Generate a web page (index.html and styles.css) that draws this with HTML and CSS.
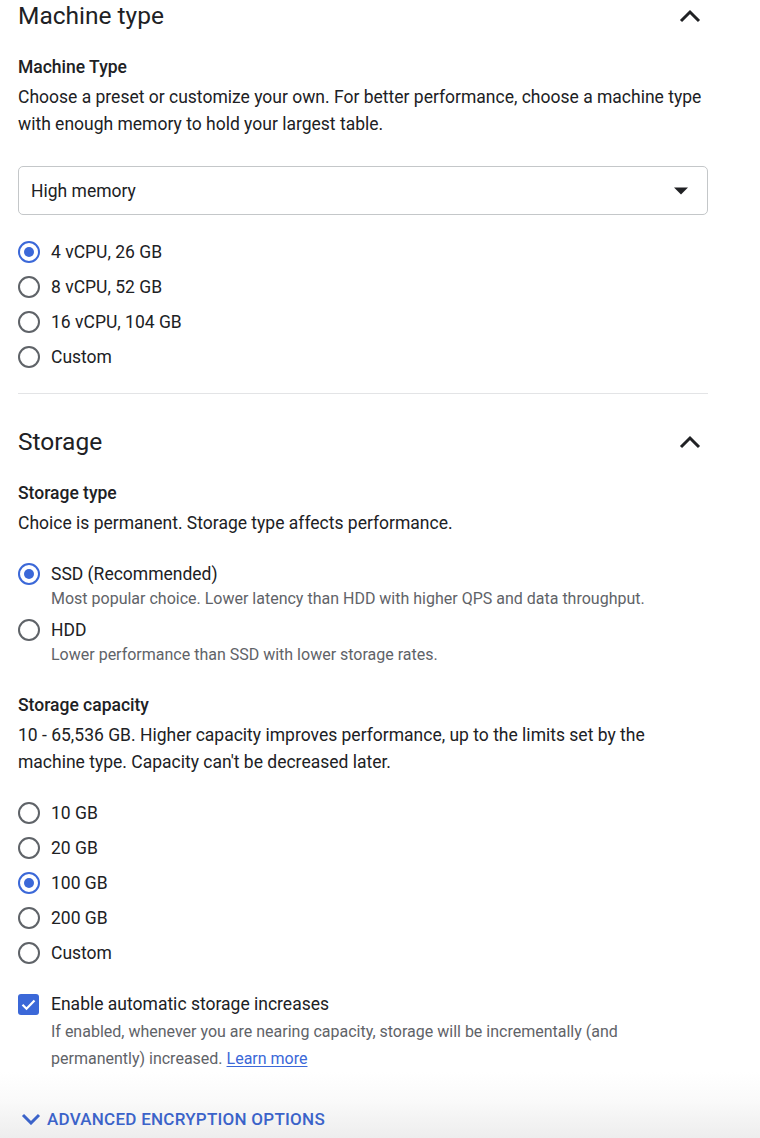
FILE: index.html
```html
<!DOCTYPE html>
<html lang="en">
<head>
<meta charset="utf-8">
<title>Machine type and storage</title>
<link rel="stylesheet" href="styles.css">
</head>
<body>
<main class="page">
  <section class="section">
    <div class="section-head">
      <h2 class="section-title">Machine type</h2>
      <svg class="chev" width="22" height="14" viewBox="0 0 22 14"><path d="M2 12l9-9 9 9" fill="none" stroke="#202124" stroke-width="3"/></svg>
    </div>
    <h3 class="sub">Machine Type</h3>
    <p class="desc">Choose a preset or customize your own. For better performance, choose a machine type with enough memory to hold your largest table.</p>
    <div class="select">
      <span>High memory</span>
      <svg class="caret" width="16" height="8" viewBox="0 0 16 8"><path d="M1 0.5h14L8 7.5z"/></svg>
    </div>
    <ul class="radios mt-type">
      <li class="radio-row"><span class="radio on"></span><span>4 vCPU, 26 GB</span></li>
      <li class="radio-row"><span class="radio"></span><span>8 vCPU, 52 GB</span></li>
      <li class="radio-row"><span class="radio"></span><span>16 vCPU, 104 GB</span></li>
      <li class="radio-row"><span class="radio"></span><span>Custom</span></li>
    </ul>
  </section>
  <hr class="divider">
  <section class="section">
    <div class="section-head">
      <h2 class="section-title">Storage</h2>
      <svg class="chev" width="22" height="14" viewBox="0 0 22 14"><path d="M2 12l9-9 9 9" fill="none" stroke="#202124" stroke-width="3"/></svg>
    </div>
    <h3 class="sub">Storage type</h3>
    <p class="desc">Choice is permanent. Storage type affects performance.</p>
    <ul class="radios st-type">
      <li class="opt">
        <div class="radio-row"><span class="radio on"></span><span>SSD (Recommended)</span></div>
        <p class="help">Most popular choice. Lower latency than HDD with higher QPS and data throughput.</p>
      </li>
      <li class="opt">
        <div class="radio-row"><span class="radio"></span><span>HDD</span></div>
        <p class="help">Lower performance than SSD with lower storage rates.</p>
      </li>
    </ul>
    <h3 class="sub cap">Storage capacity</h3>
    <p class="desc">10 - 65,536 GB. Higher capacity improves performance, up to the limits set by the machine type. Capacity can't be decreased later.</p>
    <ul class="radios st-cap">
      <li class="radio-row"><span class="radio"></span><span>10 GB</span></li>
      <li class="radio-row"><span class="radio"></span><span>20 GB</span></li>
      <li class="radio-row"><span class="radio on"></span><span>100 GB</span></li>
      <li class="radio-row"><span class="radio"></span><span>200 GB</span></li>
      <li class="radio-row"><span class="radio"></span><span>Custom</span></li>
    </ul>
    <div class="check-block">
      <div class="radio-row">
        <span class="checkbox"><svg width="21" height="21" viewBox="0 0 21 21"><path d="M4.5 10.8l4 4 8-8.3" fill="none" stroke="#fff" stroke-width="2.2"/></svg></span>
        <span>Enable automatic storage increases</span>
      </div>
      <p class="help tall">If enabled, whenever you are nearing capacity, storage will be incrementally (and permanently) increased. <a class="link" href="#">Learn more</a></p>
    </div>
  </section>
  <footer class="footer">
    <div class="adv">
      <svg width="20" height="12" viewBox="0 0 20 12"><path d="M2 2l8 8 8-8" fill="none" stroke="#3b63c9" stroke-width="3"/></svg>
      <span>ADVANCED ENCRYPTION OPTIONS</span>
    </div>
  </footer>
</main>
</body>
</html>
```
FILE: styles.css
```css
* { box-sizing: border-box; }
html, body { margin: 0; padding: 0; background: #fff; }
body {
  font-family: Roboto, "Liberation Sans", Arial, sans-serif;
  color: #202124;
  font-size: 17.5px;
  overflow: hidden;
}
.page { width: 760px; }
.section { width: 690px; margin-left: 18px; }
.section-head {
  height: 32px;
  display: flex;
  align-items: center;
  justify-content: space-between;
  padding-right: 7px;
}
.section-title {
  margin: 0;
  font-size: 24.5px;
  font-weight: 400;
  line-height: 32px;
}
.chev { display: block; }
.sub {
  margin: 23px 0 0;
  font-size: 17.5px;
  font-weight: 500;
  line-height: 24px;
}
.desc {
  margin: 4.5px 0 0;
  line-height: 27px;
}
.select {
  margin-top: 28.5px;
  height: 49px;
  border: 1px solid #c4c7c9;
  border-radius: 5px;
  display: flex;
  align-items: center;
  justify-content: space-between;
  padding: 0 18px 0 12px;
}
.caret { fill: #202124; display: block; }
.radios { list-style: none; margin: 0; padding: 0; }
.mt-type { margin-top: 19.5px; }
.radio-row {
  height: 35px;
  display: flex;
  align-items: center;
  gap: 11px;
}
.radio {
  width: 22px;
  height: 22px;
  border: 2.2px solid #5f6368;
  border-radius: 50%;
  display: flex;
  align-items: center;
  justify-content: center;
  flex: none;
}
.radio.on { border-color: #3b68d8; }
.radio.on::after {
  content: "";
  width: 10px;
  height: 10px;
  border-radius: 50%;
  background: #3b68d8;
}
.divider {
  margin: 18.5px 0 32px 18px;
  width: 690px;
  border: 0;
  border-top: 1px solid #e3e4e6;
  height: 0;
}
.st-type { margin-top: 25.5px; }
.opt .radio-row { height: 24px; }
.opt + .opt { margin-top: 8.5px; }
.help {
  margin: 1.5px 0 0 33px;
  font-size: 16px;
  line-height: 22px;
  color: #5f6368;
}
.sub.cap { margin-top: 27.5px; }
.st-cap { margin-top: 20px; }
.check-block { margin-top: 21.5px; }
.check-block .radio-row { height: 24px; }
.checkbox {
  width: 21px;
  height: 21px;
  margin-right: 1px;
  background: #3b68d8;
  border-radius: 3px;
  display: flex;
  flex: none;
}
.help.tall { line-height: 27px; margin-top: 1.5px; }
.link { color: #3b68d8; text-decoration: underline; text-underline-offset: 2px; text-decoration-thickness: 1px; }
.footer {
  height: 70px;
  background: linear-gradient(#ffffff 0%, #fafafa 40%, #ececec 100%);
  padding: 35.5px 0 0 21px;
}
.adv {
  display: flex;
  align-items: center;
  gap: 6px;
  color: #3b63c9;
  font-weight: 500;
  font-size: 17px;
  height: 24px;
  letter-spacing: 0.25px;
}
.adv svg { display: block; }
```
